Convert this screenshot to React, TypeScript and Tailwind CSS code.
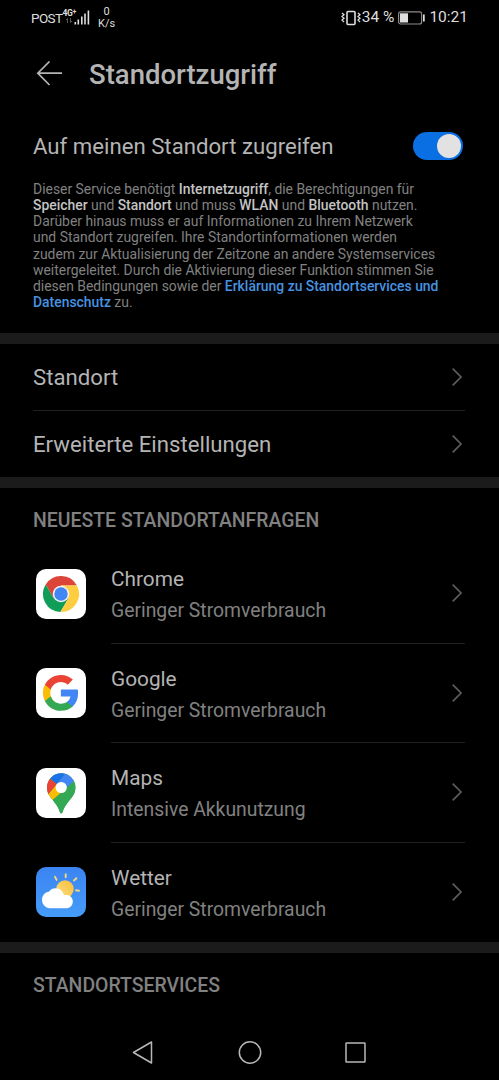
import React from 'react';

interface AppEntry {
  name: string;
  usage: string;
  icon: React.ReactNode;
}

const ChromeIcon = () => (
  <svg viewBox="0 0 50 50" className="w-[50px] h-[50px]">
    <rect width="50" height="50" rx="10" fill="#fff" />
    <path d="M9.7 15.5A18 18 0 0 1 40.9 16.5H25L25 25L17.6 29.3Z" fill="#db4437" />
    <path d="M24.4 43A18 18 0 0 1 9.7 15.5L17.6 29.3L25 25L32.4 29.3Z" fill="#0f9d58" />
    <path d="M40.9 16.5A18 18 0 0 1 24.4 43L32.4 29.3L25 25V16.5Z" fill="#ffcd40" />
    <circle cx="25" cy="25" r="8.3" fill="#f1f1f1" />
    <circle cx="25" cy="25" r="6.7" fill="#4285f4" />
  </svg>
);

const GoogleIcon = () => (
  <svg viewBox="0 0 50 50" className="w-[50px] h-[50px]">
    <rect width="50" height="50" rx="10" fill="#fff" />
    <g transform="translate(5.3 5.3) scale(1.63)">
      <path fill="#4285F4" d="M22.56 12.25c0-.78-.07-1.53-.2-2.25H12v4.26h5.92c-.26 1.37-1.04 2.53-2.21 3.31v2.77h3.57c2.08-1.92 3.28-4.74 3.28-8.09z" />
      <path fill="#34A853" d="M12 23c2.97 0 5.46-.98 7.28-2.66l-3.57-2.77c-.98.66-2.23 1.06-3.71 1.06-2.86 0-5.29-1.93-6.16-4.53H2.18v2.84C3.99 20.53 7.7 23 12 23z" />
      <path fill="#FBBC05" d="M5.84 14.09c-.22-.66-.35-1.36-.35-2.09s.13-1.43.35-2.09V7.07H2.18C1.43 8.55 1 10.22 1 12s.43 3.45 1.18 4.93l3.66-2.84z" />
      <path fill="#EA4335" d="M12 5.38c1.62 0 3.06.56 4.21 1.64l3.15-3.15C17.45 2.09 14.97 1 12 1 7.7 1 3.99 3.47 2.18 7.07l3.66 2.84c.87-2.6 3.3-4.53 6.16-4.53z" />
    </g>
  </svg>
);

const MapsIcon = () => (
  <svg viewBox="0 0 50 50" className="w-[50px] h-[50px]">
    <defs>
      <clipPath id="pin">
        <path d="M25.2 5.3A14.2 14.2 0 0 0 11 19.5C11 25 13.6 28.3 16.5 31.8C19.8 35.9 22.3 39 23.6 43.2C24 44.6 24.4 45.2 25.2 45.2C26 45.2 26.4 44.6 26.8 43.2C28.1 39 30.6 35.9 33.9 31.8C36.8 28.3 39.4 25 39.4 19.5A14.2 14.2 0 0 0 25.2 5.3Z" />
      </clipPath>
    </defs>
    <rect width="50" height="50" rx="10" fill="#fff" />
    <g clipPath="url(#pin)">
      <rect width="50" height="50" fill="#34a853" />
      <path d="M20.8 15.7L12.5 26L10 30L16.4 32.6L29.6 23.2Z" fill="#fbbc04" />
      <path d="M14.3 10.4L20.8 15.9L12.4 26L9 24V14Z" fill="#ea4335" />
      <path d="M14.3 10.4L20.8 15.9L29.5 5.5V0H10Z" fill="#1a73e8" />
      <path d="M29.5 5.5L20.8 15.9L29.6 23.2L38.2 13.2L42 0H29Z" fill="#4285f4" />
      <path d="M38 13L16.3 32.2L25 50H45V13Z" fill="#34a853" />
    </g>
    <circle cx="25.2" cy="19.5" r="5.6" fill="#fff" />
  </svg>
);

const WeatherIcon = () => (
  <svg viewBox="0 0 50 50" className="w-[50px] h-[50px]">
    <defs>
      <linearGradient id="sky" x1="0" y1="0" x2="0" y2="1">
        <stop offset="0" stopColor="#3b84f2" />
        <stop offset="1" stopColor="#459cf8" />
      </linearGradient>
      <linearGradient id="sun" x1="0" y1="1" x2="1" y2="0">
        <stop offset="0" stopColor="#fbe08a" />
        <stop offset="1" stopColor="#f9bd35" />
      </linearGradient>
    </defs>
    <rect width="50" height="50" rx="10" fill="url(#sky)" />
    <circle cx="29" cy="22" r="8.7" fill="url(#sun)" />
    <path
      d="M19 9.8L20.6 12.9M29.7 7.2V10.2M40.4 11.2L38 13.5M43 23.8L40 23.2"
      stroke="#f4d67e"
      strokeWidth="1.9"
      strokeLinecap="round"
    />
    <path d="M13.5 41.3A8.3 8.3 0 0 1 6 32.8C6 28.4 9.2 25 12.8 24.7C14.5 22.3 16.8 21.2 19.5 21.2C23.6 21.2 27 24 28 28.2C33 27.2 36.8 30 36.8 34.4C36.8 38.3 33.8 41.3 30 41.3Z" fill="#fff" />
  </svg>
);

const apps: AppEntry[] = [
  { name: 'Chrome', usage: 'Geringer Stromverbrauch', icon: <ChromeIcon /> },
  { name: 'Google', usage: 'Geringer Stromverbrauch', icon: <GoogleIcon /> },
  { name: 'Maps', usage: 'Intensive Akkunutzung', icon: <MapsIcon /> },
  { name: 'Wetter', usage: 'Geringer Stromverbrauch', icon: <WeatherIcon /> },
];

const Chevron = () => (
  <svg viewBox="0 0 12 20" className="w-3 h-5 shrink-0" fill="none" stroke="#5c5c5c" strokeWidth="1.7">
    <path d="M1.7 1.7L10 10L1.7 18.3" />
  </svg>
);

const Band = () => <div className="h-[11px] shrink-0 bg-[#1b1b1b]" />;

const StatusBar = () => (
  <div className="flex shrink-0 items-center justify-between h-9 pl-[31px] pr-[31px] text-[#dedede]">
    <div className="flex items-center">
      <span className="text-[13.5px] tracking-[-0.6px] w-8 whitespace-nowrap">POST</span>
      <div className="flex flex-col items-end w-[13px] pb-1">
        <span className="flex text-[8.5px] leading-[9px] font-bold tracking-[-0.3px]">
          4G<span className="text-[7px] leading-[6px]">+</span>
        </span>
        <svg viewBox="0 0 6 5" className="w-1.5 h-[5px] mr-1" fill="none" stroke="#555" strokeWidth="1">
          <path d="M1.5 5V0.5L0 2M4.5 0V4.5L6 3" />
        </svg>
      </div>
      <svg viewBox="0 0 16 15" className="w-4 h-[15px] -ml-[2px] mb-0.5" fill="#dedede">
        <rect x="0.5" y="12" width="1.6" height="2.5" />
        <rect x="3.5" y="9.5" width="1.6" height="5" />
        <rect x="7" y="6.5" width="1.6" height="8" />
        <rect x="10.2" y="3.5" width="1.6" height="11" />
        <rect x="13.6" y="0.5" width="1.6" height="14" />
      </svg>
      <div className="flex flex-col items-center ml-2 text-[11px] leading-[12px]">
        <span>0</span>
        <span>K/s</span>
      </div>
    </div>
    <div className="flex items-center text-[15.5px]">
      <svg viewBox="0 0 20 16" className="w-5 h-4" fill="none" stroke="#dedede">
        <rect x="6" y="1.5" width="8" height="13" rx="1" strokeWidth="1.6" />
        <path d="M1 3L3 4.7L1 6.5L3 8.2L1 10L3 12M17 3L19 4.7L17 6.5L19 8.2L17 10L19 12" strokeWidth="1.3" />
      </svg>
      <span className="ml-px whitespace-nowrap">34 %</span>
      <svg viewBox="0 0 27 14" className="w-[27px] h-3.5 ml-1">
        <rect x="0.6" y="0.8" width="23" height="12.2" rx="2" fill="none" stroke="#8a8a8a" strokeWidth="1.2" />
        <rect x="2" y="2.3" width="8" height="9.2" fill="#dedede" />
        <rect x="25" y="3.5" width="1.7" height="7" fill="#dedede" />
      </svg>
      <span className="ml-1">10:21</span>
    </div>
  </div>
);

const App: React.FC = () => {
  return (
    <div className="w-[499px] h-[1080px] bg-black overflow-hidden flex flex-col font-['Roboto',sans-serif] text-[#b4b4b4]">
      <StatusBar />

      {/* Header */}
      <div className="flex shrink-0 items-center h-[76px] pl-9 gap-[27px]">
        <svg viewBox="0 0 26 26" className="w-[26px] h-[26px]" fill="none" stroke="#b4b4b4" strokeWidth="1.7">
          <path d="M13.5 0.5L1.8 12.2L13.5 24M1.8 12.2H26" />
        </svg>
        <h1 className="pt-0.5 text-[27.5px] font-medium whitespace-nowrap">Standortzugriff</h1>
      </div>

      {/* Location toggle */}
      <div className="flex shrink-0 items-center justify-between h-[68px] pl-[33px] pr-9">
        <span className="pt-0.5 text-[22.2px] whitespace-nowrap">Auf meinen Standort zugreifen</span>
        <div className="flex items-center justify-end w-[50px] h-7 rounded-full bg-[#0a6fe2] pr-0.5">
          <div className="size-6 rounded-full bg-[#e2e2e2]" />
        </div>
      </div>

      <p className="h-[153px] shrink-0 pt-px pl-[33px] text-[13.92px] leading-[16.15px] text-[#818181] whitespace-nowrap [&_b]:font-medium [&_b]:text-[#c4c4c4]">
        Dieser Service benötigt <b>Internetzugriff</b>, die Berechtigungen für<br />
        <b>Speicher</b> und <b>Standort</b> und muss <b>WLAN</b> und <b>Bluetooth</b> nutzen.<br />
        Darüber hinaus muss er auf Informationen zu Ihrem Netzwerk<br />
        und Standort zugreifen. Ihre Standortinformationen werden<br />
        zudem zur Aktualisierung der Zeitzone an andere Systemservices<br />
        weitergeleitet. Durch die Aktivierung dieser Funktion stimmen Sie<br />
        diesen Bedingungen sowie der <a className="font-medium text-[#4793e0]">Erklärung zu Standortservices und<br />
        Datenschutz</a> zu.
      </p>

      <Band />
      <div className="shrink-0 pl-[33px] pr-[34px] text-[22.2px]">
        <div className="flex items-center justify-between h-[67px] pr-0.5 border-b border-[#202020]">
          <span className="pt-0.5">Standort</span>
          <Chevron />
        </div>
        <div className="flex items-center justify-between h-[66px] pr-0.5">
          <span className="pt-0.5">Erweiterte Einstellungen</span>
          <Chevron />
        </div>
      </div>
      <Band />

      {/* Recent requests */}
      <h2 className="flex shrink-0 items-center h-14 pt-[10px] pl-[33px] text-[19.45px] font-medium text-[#818181]">
        NEUESTE STANDORTANFRAGEN
      </h2>
      <div className="flex shrink-0 flex-col h-[398px] pl-9 pr-[34px]">
        {apps.map((app, index) => (
          <div key={app.name} className="flex flex-1 items-center gap-[25px]">
            {app.icon}
            <div className={`flex flex-1 h-full items-center justify-between pr-0.5 ${index < apps.length - 1 ? 'border-b border-[#202020]' : ''}`}>
              <div className="pt-1">
                <div className="text-[20.8px] leading-8">{app.name}</div>
                <div className="text-[19.35px] leading-8 text-[#818181]">{app.usage}</div>
              </div>
              <Chevron />
            </div>
          </div>
        ))}
      </div>
      <Band />
      <h2 className="flex shrink-0 items-center h-[64px] pt-0.5 pl-[33px] text-[19.45px] font-medium text-[#818181]">
        STANDORTSERVICES
      </h2>

      {/* Navigation bar */}
      <div className="flex shrink-0 items-center justify-between h-14 px-[132px] mt-auto">
        <svg viewBox="0 0 22 24" className="w-[22px] h-6" fill="none" stroke="#b8b8b8" strokeWidth="1.5" strokeLinejoin="round">
          <path d="M1.5 12.5L19.5 2V23Z" />
        </svg>
        <svg viewBox="0 0 24 24" className="size-6" fill="none" stroke="#b8b8b8" strokeWidth="1.5">
          <circle cx="12" cy="12.5" r="10.7" />
        </svg>
        <svg viewBox="0 0 22 24" className="w-[22px] h-6" fill="none" stroke="#b8b8b8" strokeWidth="1.5">
          <rect x="1" y="3" width="19" height="19" rx="0.5" />
        </svg>
      </div>
    </div>
  );
};

export default App;
